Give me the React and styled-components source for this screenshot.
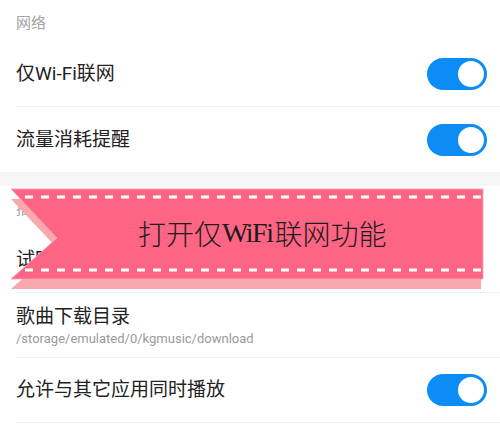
import styled, { createGlobalStyle } from 'styled-components'

const GlobalStyle = createGlobalStyle`
  html, body {
    margin: 0;
    padding: 0;
    background: #fff;
  }
  body {
    font-family: Roboto, "Noto Sans CJK SC", sans-serif;
    overflow: hidden;
  }
`

const Page = styled.div`
  position: relative;
  width: 500px;
  height: 437px;
  display: flex;
  flex-direction: column;
  background: #fff;
`

const SectionHeader = styled.div`
  height: 42px;
  display: flex;
  align-items: center;
  padding-left: 16px;
  font-size: 15px;
  color: #a3a3a3;
`

const Gap = styled.div`
  height: 14px;
  background: #f6f6f6;
`

const Row = styled.div`
  box-sizing: border-box;
  height: 65px;
  margin-left: 16px;
  padding-right: 13px;
  display: flex;
  align-items: center;
  justify-content: space-between;
  border-bottom: ${(props) => (props.divider ? '1px solid #f0f0f0' : 'none')};
`

const Texts = styled.div`
  display: flex;
  flex-direction: column;
  padding-top: ${(props) => (props.twoLine ? '4px' : '0')};
`

const Title = styled.div`
  font-size: 19px;
  line-height: 24px;
  color: #222;
`

const Sub = styled.div`
  font-size: 13px;
  line-height: 20px;
  color: #9a9a9a;
`

const Toggle = styled.div`
  box-sizing: border-box;
  width: 60px;
  height: 32px;
  border-radius: 16px;
  background: #0b8df5;
  padding: 3px;
  display: flex;
  justify-content: ${(props) => (props.on ? 'flex-end' : 'flex-start')};
  &::after {
    content: '';
    width: 26px;
    height: 26px;
    border-radius: 50%;
    background: #fff;
  }
`

const Ribbon = styled.div`
  position: absolute;
  left: 0;
  top: 180px;
  width: 500px;
  height: 120px;
`

const RibbonArt = styled.svg`
  position: absolute;
  inset: 0;
`

const RibbonLabel = styled.div`
  position: absolute;
  left: 138px;
  top: 35px;
  height: 36px;
  display: flex;
  align-items: center;
  font-family: "Liberation Serif", "Noto Sans CJK SC", serif;
  font-size: 28px;
  font-weight: 300;
  color: #1c1c1c;
  white-space: nowrap;
`

const Latin = styled.span`
  font-weight: 400;
  letter-spacing: -1.5px;
  margin-right: 2px;
`

function Switch() {
  return <Toggle on />
}

function Banner() {
  return (
    <Ribbon>
      <RibbonArt width="500" height="120" viewBox="0 0 500 120">
        <polygon points="11,19 481,19 481,109 11,109 57,68" fill="#f9a9ad" />
        <polygon
          points="11,9 483,9 483,99 11,99 57,58"
          fill="#fe6584"
          stroke="#fba3b4"
          strokeWidth="0.8"
        />
        <line x1="25" y1="17" x2="483" y2="17" stroke="#fff" strokeWidth="3" strokeDasharray="8 8" />
        <line x1="25" y1="90" x2="483" y2="90" stroke="#fff" strokeWidth="3" strokeDasharray="8 8" />
      </RibbonArt>
      <RibbonLabel>
        打开仅<Latin>WiFi</Latin>联网功能
      </RibbonLabel>
    </Ribbon>
  )
}

export default function App() {
  return (
    <Page>
      <GlobalStyle />
      <SectionHeader>网络</SectionHeader>
      <Row divider>
        <Title>仅Wi-Fi联网</Title>
        <Switch />
      </Row>
      <Row>
        <Title>流量消耗提醒</Title>
        <Switch />
      </Row>
      <Gap />
      <SectionHeader>播放</SectionHeader>
      <Row divider>
        <Title>试听音质</Title>
      </Row>
      <Row divider>
        <Texts twoLine>
          <Title>歌曲下载目录</Title>
          <Sub>/storage/emulated/0/kgmusic/download</Sub>
        </Texts>
      </Row>
      <Row divider>
        <Title>允许与其它应用同时播放</Title>
        <Switch />
      </Row>
      <Banner />
    </Page>
  )
}
